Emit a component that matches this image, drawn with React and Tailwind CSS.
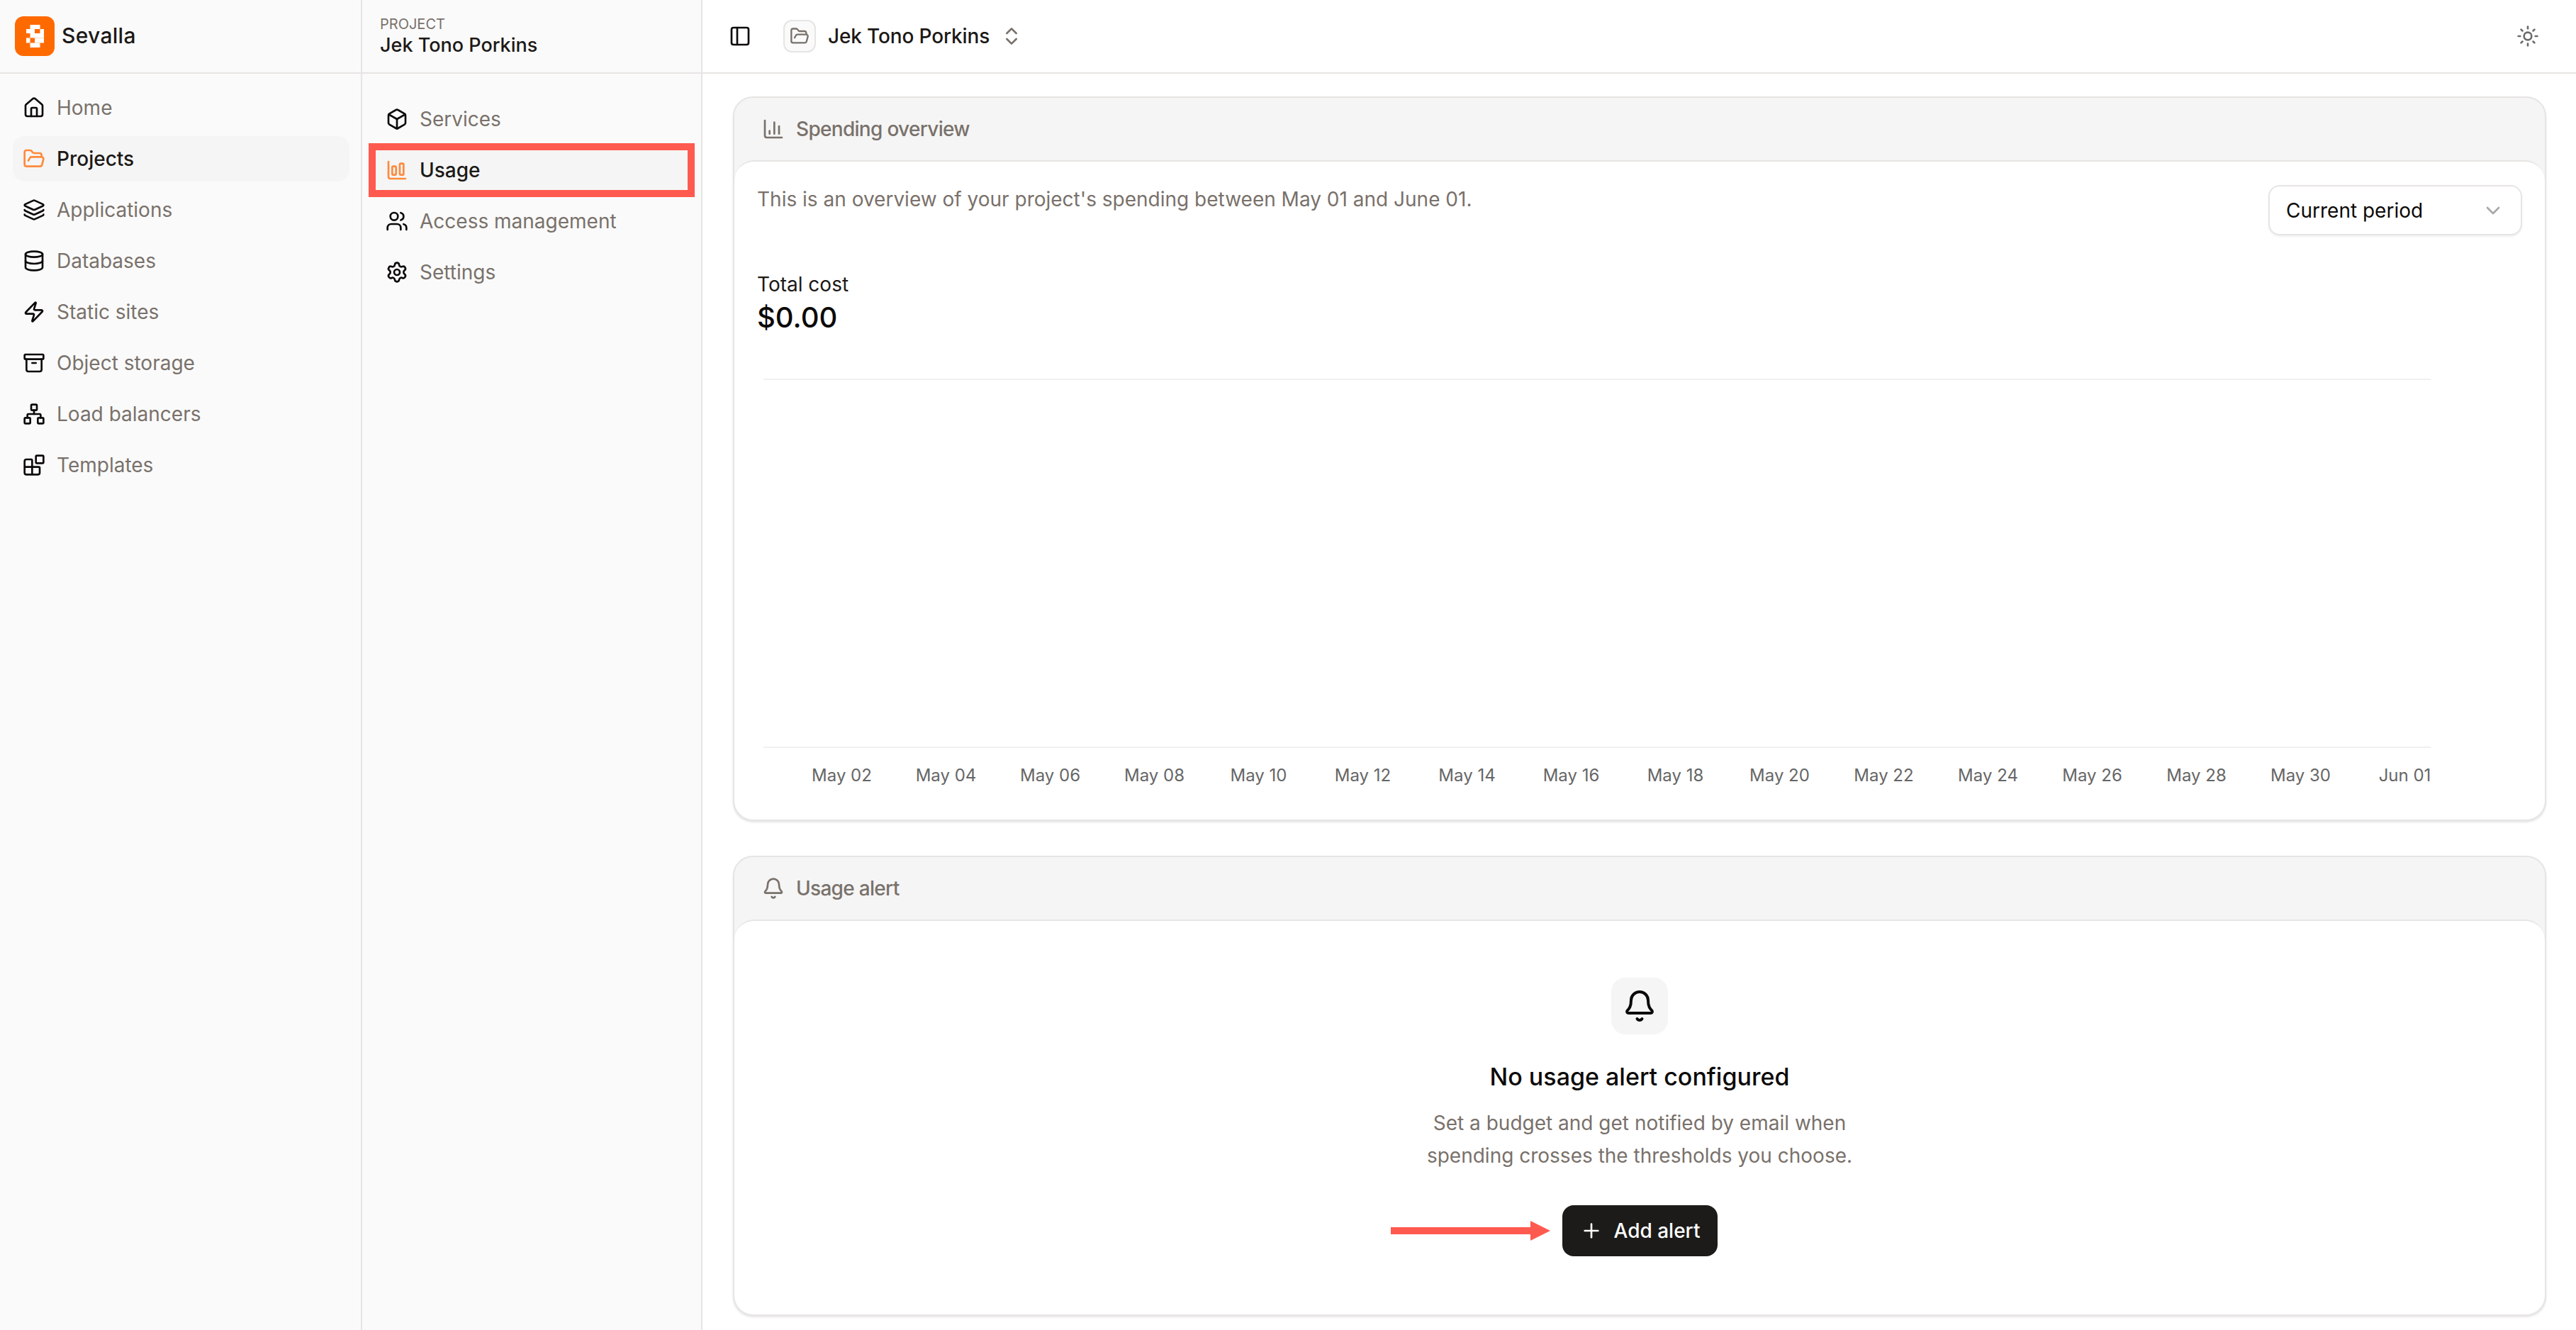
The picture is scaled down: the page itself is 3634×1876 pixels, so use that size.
import React from 'react';
import {
    House, FolderOpen, Layers, Database, Zap, Archive, Network, Blocks,
    Box, ChartColumnBig, ChartColumn, Users, Settings, PanelLeft,
    ChevronsUpDown, Sun, ChevronDown, Bell, Plus,
} from 'lucide-react';

const mainNav = [
    { label: 'Home', icon: House },
    { label: 'Projects', icon: FolderOpen, active: true },
    { label: 'Applications', icon: Layers },
    { label: 'Databases', icon: Database },
    { label: 'Static sites', icon: Zap },
    { label: 'Object storage', icon: Archive },
    { label: 'Load balancers', icon: Network },
    { label: 'Templates', icon: Blocks },
];

const projectNav = [
    { label: 'Services', icon: Box },
    { label: 'Usage', icon: ChartColumnBig, active: true, marked: true },
    { label: 'Access management', icon: Users },
    { label: 'Settings', icon: Settings },
];

const days = ['May 02', 'May 04', 'May 06', 'May 08', 'May 10', 'May 12', 'May 14', 'May 16', 'May 18', 'May 20', 'May 22', 'May 24', 'May 26', 'May 28', 'May 30', 'Jun 01'];

const Logo = () => (
    <svg viewBox="0 0 56 56" className="w-14 h-14 shrink-0">
        <rect width="56" height="56" rx="12" fill="#ff6a00" />
        <g fill="#fff">
            <rect x="21.5" y="12" width="14" height="6" />
            <rect x="16" y="18" width="12" height="6" />
            <rect x="35.5" y="18" width="5.5" height="6" />
            <rect x="21.5" y="24" width="19.5" height="6.5" />
            <rect x="16" y="30.5" width="5.5" height="7" />
            <rect x="28" y="30.5" width="13" height="7" />
            <rect x="21.5" y="37.5" width="14" height="6.5" />
        </g>
    </svg>
);

const NavRow = ({ item, left }) => {
    const Icon = item.icon;
    return (
        <div className={`relative flex items-center gap-4 h-16 rounded-2xl ${left} ${item.active ? 'bg-[#f5f5f5] text-[#1c1917] font-medium' : 'text-[#79716b]'}`}>
            <Icon size={32} strokeWidth={2} className={item.active ? 'text-[#ff8a3c]' : 'text-[#0c0a09]'} />
            <span className="text-[28px] leading-10">{item.label}</span>
            {item.marked && <span className="absolute -left-[9px] -right-[8px] -top-[6px] -bottom-[6px] border-[10px] border-[#ff5a4f]" />}
        </div>
    );
};

const Card = ({ icon: Icon, title, children, className }) => (
    <section className={`flex flex-col rounded-[28px] border-2 border-[#e7e5e4] bg-[#f5f5f5] shadow-[0_2px_3px_rgba(0,0,0,0.1)] ${className}`}>
        <div className="flex items-center gap-4 h-[88px] pl-[39px] shrink-0">
            <Icon size={32} className="text-[#79716b]" />
            <h2 className="text-[28px] font-medium tracking-[-0.7px] text-[#79716b]">{title}</h2>
        </div>
        <div className="flex-1 bg-white rounded-[28px] border-t-2 border-[#e7e5e4]">
            {children}
        </div>
    </section>
);

const App = () => {
    return (
        <div className="flex h-screen overflow-hidden bg-white [font-family:Inter,sans-serif]">
            <aside className="w-[511px] shrink-0 bg-[#fafafa] border-r-2 border-[#e7e5e4]">
                <div className="flex items-center gap-[10px] h-[104px] pl-[21px] pb-[1px] border-b-2 border-[#e7e5e4]">
                    <Logo />
                    <span className="text-[30px] font-medium tracking-[0.3px] text-[#1c1917]">Sevalla</span>
                </div>
                <nav className="flex flex-col gap-2 pt-4 pl-[18px] pr-4">
                    {mainNav.map(item => <NavRow key={item.label} item={item} left="pl-[14px]" />)}
                </nav>
            </aside>

            <aside className="w-[480px] shrink-0 bg-[#fafafa] border-r-2 border-[#e7e5e4]">
                <div className="flex flex-col justify-center h-[104px] pl-[25px] pt-[2px] border-b-2 border-[#e7e5e4]">
                    <span className="text-[20px] leading-6 text-[#79716b]">PROJECT</span>
                    <span className="text-[27px] leading-9 font-medium text-[#1c1917]">Jek Tono Porkins</span>
                </div>
                <nav className="flex flex-col gap-2 pt-8 pl-[18px] pr-[17px]">
                    {projectNav.map(item => <NavRow key={item.label} item={item} left="pl-[15px]" />)}
                </nav>
            </aside>

            <main className="flex-1 min-w-0">
                <header className="flex items-center h-[104px] pl-[37px] pr-[52px] border-b-2 border-[#e7e5e4]">
                    <PanelLeft size={32} className="text-[#0c0a09]" />
                    <div className="flex items-center justify-center w-[46px] h-[46px] ml-[45px] rounded-xl border-2 border-[#e7e5e4] bg-[#fafafa]">
                        <FolderOpen size={28} className="text-[#79716b]" />
                    </div>
                    <span className="ml-[17px] text-[28px] font-medium tracking-[-0.15px] text-[#1c1917]">Jek Tono Porkins</span>
                    <ChevronsUpDown size={32} className="ml-[15px] text-[#79716b]" />
                    <Sun size={32} className="ml-auto text-[#6b6b6b]" />
                </header>

                <div className="flex flex-col gap-[49px] pt-8 pl-[43px] pr-[42px]">
                    <Card icon={ChartColumn} title="Spending overview" className="h-[1022px]">
                        <div className="px-8 pt-[33px]">
                            <div className="flex justify-between items-start">
                                <p className="text-[28px] leading-10 text-[#79716b]">This is an overview of your project's spending between May 01 and June 01.</p>
                                <button className="flex items-center justify-between w-[358px] h-[71px] pl-[23px] pr-[23px] rounded-2xl border-2 border-[#e7e5e4] bg-white shadow-[0_2px_3px_rgba(0,0,0,0.06)] text-[28px] text-[#0c0a09]">
                                    Current period
                                    <ChevronDown size={32} className="text-[#a8a8a8]" />
                                </button>
                            </div>
                            <div className="mt-[49px] text-[28px] leading-10 text-[#1c1917]">Total cost</div>
                            <div className="text-[40px] leading-[54px] font-medium text-[#0c0a09]">$0.00</div>
                            <div className="mt-[59px] ml-[9px] mr-[129px]">
                                <div className="h-[521px] border-y-2 border-[#f0f0f0]" />
                                <div className="grid grid-cols-16 pl-[37px] -mr-[37px] pt-[21px] text-center text-[24px] leading-9 text-[#666666]">
                                    {days.map(d => <span key={d}>{d}</span>)}
                                </div>
                            </div>
                        </div>
                    </Card>

                    <Card icon={Bell} title="Usage alert" className="h-[649px]">
                        <div className="flex flex-col items-center pt-[80px]">
                            <div className="flex items-center justify-center w-20 h-20 rounded-[20px] bg-[#f5f5f5]">
                                <Bell size={48} strokeWidth={2} className="text-[#0c0a09]" />
                            </div>
                            <h3 className="mt-[36px] text-[34px] leading-[48px] font-medium text-[#0c0a09]">No usage alert configured</h3>
                            <p className="mt-[18px] text-[28px] leading-[46px] text-center text-[#79716b]">
                                Set a budget and get notified by email when<br />spending crosses the thresholds you choose.
                            </p>
                            <div className="relative mt-[47px]">
                                <button className="flex items-center gap-4 h-[72px] w-[219px] pl-[25px] rounded-2xl bg-[#1c1b19] text-[28px] font-medium text-white">
                                    <Plus size={32} strokeWidth={2} />
                                    Add alert
                                </button>
                                <svg viewBox="0 0 225 28" className="absolute -left-[242px] top-[22px] w-[225px] h-7">
                                    <path d="M0 9h197V0l28 14-28 14v-9H0z" fill="#ff5a4f" />
                                </svg>
                            </div>
                        </div>
                    </Card>
                </div>
            </main>
        </div>
    );
};

export default App;
